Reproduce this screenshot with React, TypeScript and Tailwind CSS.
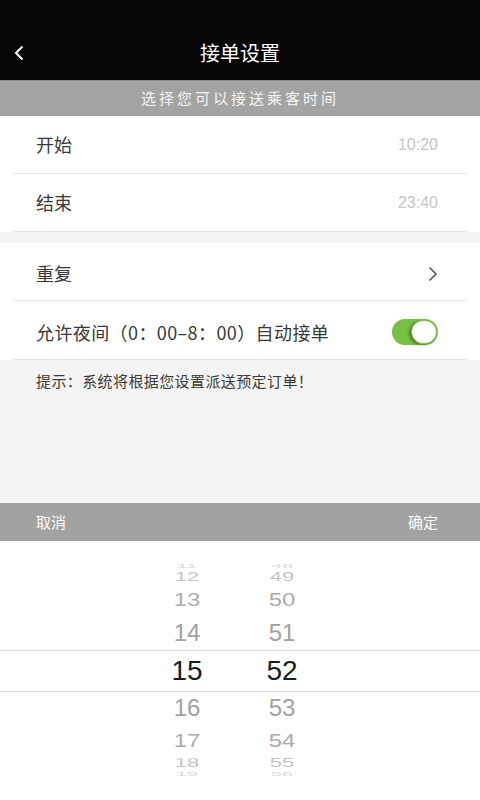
import { useState } from "react"

const cjk = { fontFamily: '"Noto Sans CJK SC", "Liberation Sans", sans-serif' }
const num = { fontFamily: '"Liberation Sans", "Noto Sans CJK SC", sans-serif' }

const wheel = [
  { h: "11", m: "48", row: "h-[8px] overflow-hidden", text: "text-[20px] text-[#dadada] scale-y-[0.3]" },
  { h: "12", m: "49", row: "h-[14px]", text: "text-[22px] text-[#c4c4c4] scale-y-[0.6]" },
  { h: "13", m: "50", row: "h-[32px]", text: "text-[24px] text-[#acacac] scale-y-[0.8]" },
  { h: "14", m: "51", row: "h-[34px]", text: "text-[24px] text-[#a2a2a2]" },
  { h: "15", m: "52", row: "h-[42px] border-y border-[#dcdcdc]", text: "text-[28px] text-[#1c1c1c]" },
  { h: "16", m: "53", row: "h-[32px]", text: "text-[24px] text-[#a2a2a2]" },
  { h: "17", m: "54", row: "h-[34px]", text: "text-[24px] text-[#acacac] scale-y-[0.8]" },
  { h: "18", m: "55", row: "h-[10px]", text: "text-[22px] text-[#c4c4c4] scale-y-[0.6]" },
  { h: "19", m: "56", row: "h-[12px] overflow-hidden", text: "text-[20px] text-[#dadada] scale-y-[0.3]" },
]

function Toggle({ on, onClick }: { on: boolean; onClick: () => void }) {
  return (
    <button
      onClick={onClick}
      className={`flex h-[26px] w-[46px] items-center rounded-full p-[1px] ${on ? "justify-end bg-[#78c043]" : "justify-start bg-[#e5e5e5]"}`}
    >
      <span className="h-[24px] w-[26px] rounded-full border border-[#78c043] bg-white shadow-[-2px_1px_3px_rgba(0,0,0,0.35)]" />
    </button>
  )
}

export default function App() {
  const [night, setNight] = useState(true)

  return (
    <div className="flex h-[800px] w-[480px] flex-col overflow-hidden bg-[#f4f4f4]" style={cjk}>
      {/* Header */}
      <div className="h-[80px] bg-[#050505]">
        <div className="mt-[31px] grid h-[44px] grid-cols-[60px_1fr_60px] items-center">
          <div className="pl-[14px]">
            <svg width="10" height="16" viewBox="0 0 10 16" fill="none">
              <path d="M8.5 1.5 L2 8 L8.5 14.5" stroke="#fff" strokeWidth="2" />
            </svg>
          </div>
          <div className="text-center text-[20px] text-white">接单设置</div>
          <div />
        </div>
      </div>

      {/* Notice band */}
      <div className="flex h-[36px] items-center justify-center border-t border-[#8c8c8c] bg-[#a3a3a3] text-[15px] tracking-[3px] text-[#f4f4f4]">
        选择您可以接送乘客时间
      </div>

      {/* Start / end */}
      <div className="bg-white">
        <div className="mx-[13px] flex h-[58px] items-center justify-between border-b border-[#e6e6e6] pl-[23px] pr-[29px]">
          <span className="text-[18px] text-[#3a3a3a]">开始</span>
          <span className="text-[16px] text-[#c6c6c6]" style={num}>10:20</span>
        </div>
        <div className="mx-[13px] flex h-[58px] items-center justify-between border-b border-[#e6e6e6] pl-[23px] pr-[29px]">
          <span className="text-[18px] text-[#3a3a3a]">结束</span>
          <span className="text-[16px] text-[#c6c6c6]" style={num}>23:40</span>
        </div>
      </div>

      <div className="h-[11px]" />

      {/* Repeat / night */}
      <div className="bg-white">
        <div className="mx-[13px] flex h-[58px] items-center justify-between border-b border-[#e6e6e6] pl-[23px] pr-[29px] pt-[4px]">
          <span className="text-[18px] text-[#3a3a3a]">重复</span>
          <svg width="10" height="16" viewBox="0 0 10 16" fill="none">
            <path d="M1.5 1.5 L8 8 L1.5 14.5" stroke="#555" strokeWidth="1.6" />
          </svg>
        </div>
        <div className="mx-[13px] flex h-[59px] items-center justify-between border-b border-[#e6e6e6] pl-[23px] pr-[29px] pt-[4px]">
          <span className="text-[18px] tracking-[0.4px] text-[#3a3a3a]">允许夜间（0：00–8：00）自动接单</span>
          <Toggle on={night} onClick={() => setNight(!night)} />
        </div>
      </div>

      {/* Tip */}
      <div className="px-[36px] pt-[12px] text-[15px] leading-[18px] tracking-[0.4px] text-[#3a3a3a]">
        提示：系统将根据您设置派送预定订单！
      </div>

      <div className="flex-1" />

      {/* Picker toolbar */}
      <div className="flex h-[38px] items-center justify-between bg-[#a2a2a2] pl-[36px] pr-[42px] text-[15px] text-white">
        <span>取消</span>
        <span>确定</span>
      </div>

      {/* Time wheel */}
      <div className="h-[259px] bg-white pt-[21px]" style={num}>
        {wheel.map((r) => (
          <div key={r.h} className={`flex items-center pl-[157px] ${r.row}`}>
            <div className="flex w-[60px] justify-center">
              <span className={`leading-none ${r.text}`}>{r.h}</span>
            </div>
            <div className="ml-[35px] flex w-[60px] justify-center">
              <span className={`leading-none ${r.text}`}>{r.m}</span>
            </div>
          </div>
        ))}
      </div>
    </div>
  )
}
